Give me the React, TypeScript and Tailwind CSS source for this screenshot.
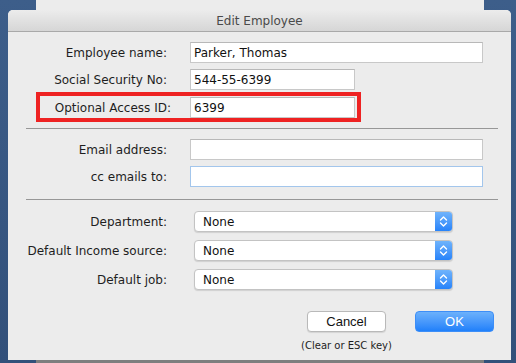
import React from 'react';

const font = { fontFamily: '"DejaVu Sans", Verdana, sans-serif' };

function Field({ label, value = '', wide = true, focus = false, shift = false }: { label: string; value?: string; wide?: boolean; focus?: boolean; shift?: boolean }) {
  return (
    <div className="flex items-center">
      <div className={`shrink-0 text-right text-[12px] text-[#1e1e1e] ${shift ? 'w-[163px]' : 'w-[159px]'}`}>{label}</div>
      <div
        className={`h-[21px] bg-white border flex items-center pl-[3px] text-[12px] text-[#111] ${shift ? 'ml-[19px]' : 'ml-[23px]'} ${
          wide ? 'w-[293px]' : 'w-[165px]'
        } ${focus ? 'border-[#a3c6ec]' : 'border-[#c8c8c8] border-t-[#b8b8b8]'}`}
      >
        {value}
      </div>
    </div>
  );
}

function Select({ label }: { label: string }) {
  return (
    <div className="flex items-center">
      <div className="w-[159px] shrink-0 text-right text-[12px] text-[#1e1e1e]">{label}</div>
      <div className="ml-[27px] w-[259px] h-[21px] flex rounded-[4px] bg-white border border-[#c3c3c3] shadow-[0_1px_1px_rgba(0,0,0,0.12)] overflow-hidden">
        <div className="flex-1 flex items-center pl-[8px] text-[12px] text-[#111]">None</div>
        <div className="w-[17px] h-full bg-gradient-to-b from-[#6fb3fb] to-[#2683fa] flex items-center justify-center">
          <svg width="9" height="13" viewBox="0 0 9 13" fill="none" stroke="white" strokeWidth="1.4" strokeLinecap="round" strokeLinejoin="round">
            <path d="M1.5 5 L4.5 2 L7.5 5" />
            <path d="M1.5 8 L4.5 11 L7.5 8" />
          </svg>
        </div>
      </div>
    </div>
  );
}

export default function App() {
  return (
    <div className="relative w-[516px] h-[363px] overflow-hidden bg-gradient-to-b from-[#3d5e8a] to-[#32507a]" style={font}>
      {/* window behind the sheet */}
      <div className="absolute left-[36px] top-0 w-[448px] h-[363px] bg-[#7e7e7e]">
        <div className="h-[10px] bg-[#ececec]" />
      </div>

      {/* sheet */}
      <div className="absolute left-[8px] top-[10px] w-[503px] h-[350px] bg-[#ececec] rounded-t-[5px] overflow-hidden flex flex-col">
        <div className="h-[22px] shrink-0 bg-gradient-to-b from-[#ececec] to-[#d6d6d6] border-b border-[#a9a9a9] flex items-center justify-center text-[12px] text-[#4a4a4a]">
          Edit Employee
        </div>

        <div className="mt-[10px] flex flex-col gap-[6px]">
          <Field label="Employee name:" value="Parker, Thomas" />
          <Field label="Social Security No:" value="544-55-6399" wide={false} />
        </div>

        <div className="relative mt-[7px]">
          <Field label="Optional Access ID:" value="6399" wide={false} shift />
          <div className="absolute left-[28px] top-[-5px] w-[325px] h-[30px] border-[4px] border-[#ee2222] pointer-events-none" />
        </div>

        <div className="mt-[10px] ml-[18px] w-[472px] h-px bg-[#979797]" />

        <div className="mt-[10px] flex flex-col gap-[6px]">
          <Field label="Email address:" />
          <Field label="cc emails to:" focus />
        </div>

        <div className="mt-[12px] ml-[18px] w-[472px] h-px bg-[#979797]" />

        <div className="mt-[11px] flex flex-col gap-[8px]">
          <Select label="Department:" />
          <Select label="Default Income source:" />
          <Select label="Default job:" />
        </div>

        <div className="mt-[21px] flex items-start">
          <div className="ml-[299px] w-[79px] flex flex-col items-center">
            <button className="w-[79px] h-[21px] rounded-[4px] bg-white border border-[#b9b9b9] shadow-[0_1px_1px_rgba(0,0,0,0.1)] text-[13px] text-[#111] leading-none" style={{ fontFamily: '"Liberation Sans", Arial, sans-serif' }}>
              Cancel
            </button>
            <div className="mt-[6px] text-[10px] text-[#1e1e1e] whitespace-nowrap">(Clear or ESC key)</div>
          </div>
          <button className="ml-[29px] w-[79px] h-[21px] rounded-[4px] bg-gradient-to-b from-[#6cb1fb] to-[#1f80fa] border border-[#3d8ef7] text-[13px] text-white leading-none" style={{ fontFamily: '"Liberation Sans", Arial, sans-serif' }}>
            OK
          </button>
        </div>
      </div>
    </div>
  );
}
